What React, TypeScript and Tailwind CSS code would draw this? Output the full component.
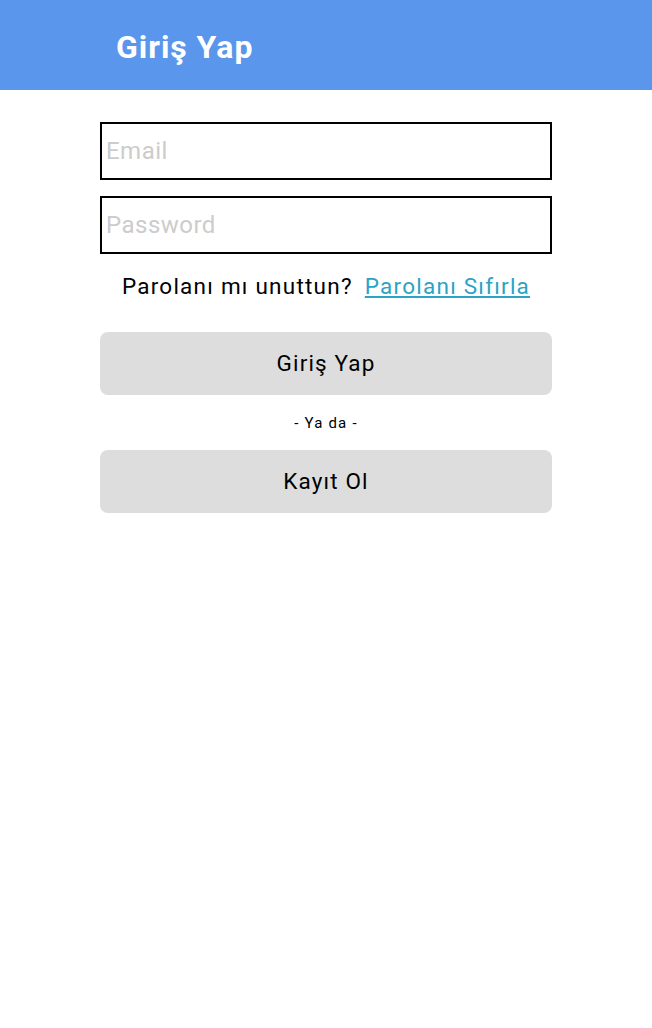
import React from 'react';

const App: React.FC = () => (
  <div className="w-[652px] h-[1028px] bg-white font-['Roboto',sans-serif]">
    <header className="h-[90px] bg-[#5a96eb] flex items-center pl-[116px]">
      <h1 className="text-white text-[32px] font-bold leading-none tracking-[0.03em] pt-[3px]">Giriş Yap</h1>
    </header>

    <div className="w-[452px] mx-auto pt-[32px] flex flex-col">
      <input
        type="email"
        placeholder="Email"
        className="h-[58px] border-2 border-black px-[4px] text-[24px] tracking-[0.02em] text-black placeholder:text-[#cccccc] outline-none"
      />
      <input
        type="password"
        placeholder="Password"
        className="h-[58px] mt-[16px] border-2 border-black px-[4px] text-[24px] tracking-[0.02em] text-black placeholder:text-[#cccccc] outline-none"
      />

      <div className="mt-[18px] flex justify-center items-center gap-[12px] text-[22.5px] tracking-[0.055em] leading-[28px]">
        <span className="text-black">Parolanı mı unuttun?</span>
        <a href="#" className="text-[#2ba3c6] underline">Parolanı Sıfırla</a>
      </div>

      <button className="mt-[32px] h-[63px] rounded-[8px] bg-[#dddddd] text-[22.5px] tracking-[0.05em] text-black">
        Giriş Yap
      </button>

      <p className="mt-[18px] text-center text-[15px] tracking-[0.08em] leading-[20px] text-black">- Ya da -</p>

      <button className="mt-[17px] h-[63px] rounded-[8px] bg-[#dddddd] text-[22.5px] tracking-[0.05em] text-black">
        Kayıt Ol
      </button>
    </div>
  </div>
);

export default App;
